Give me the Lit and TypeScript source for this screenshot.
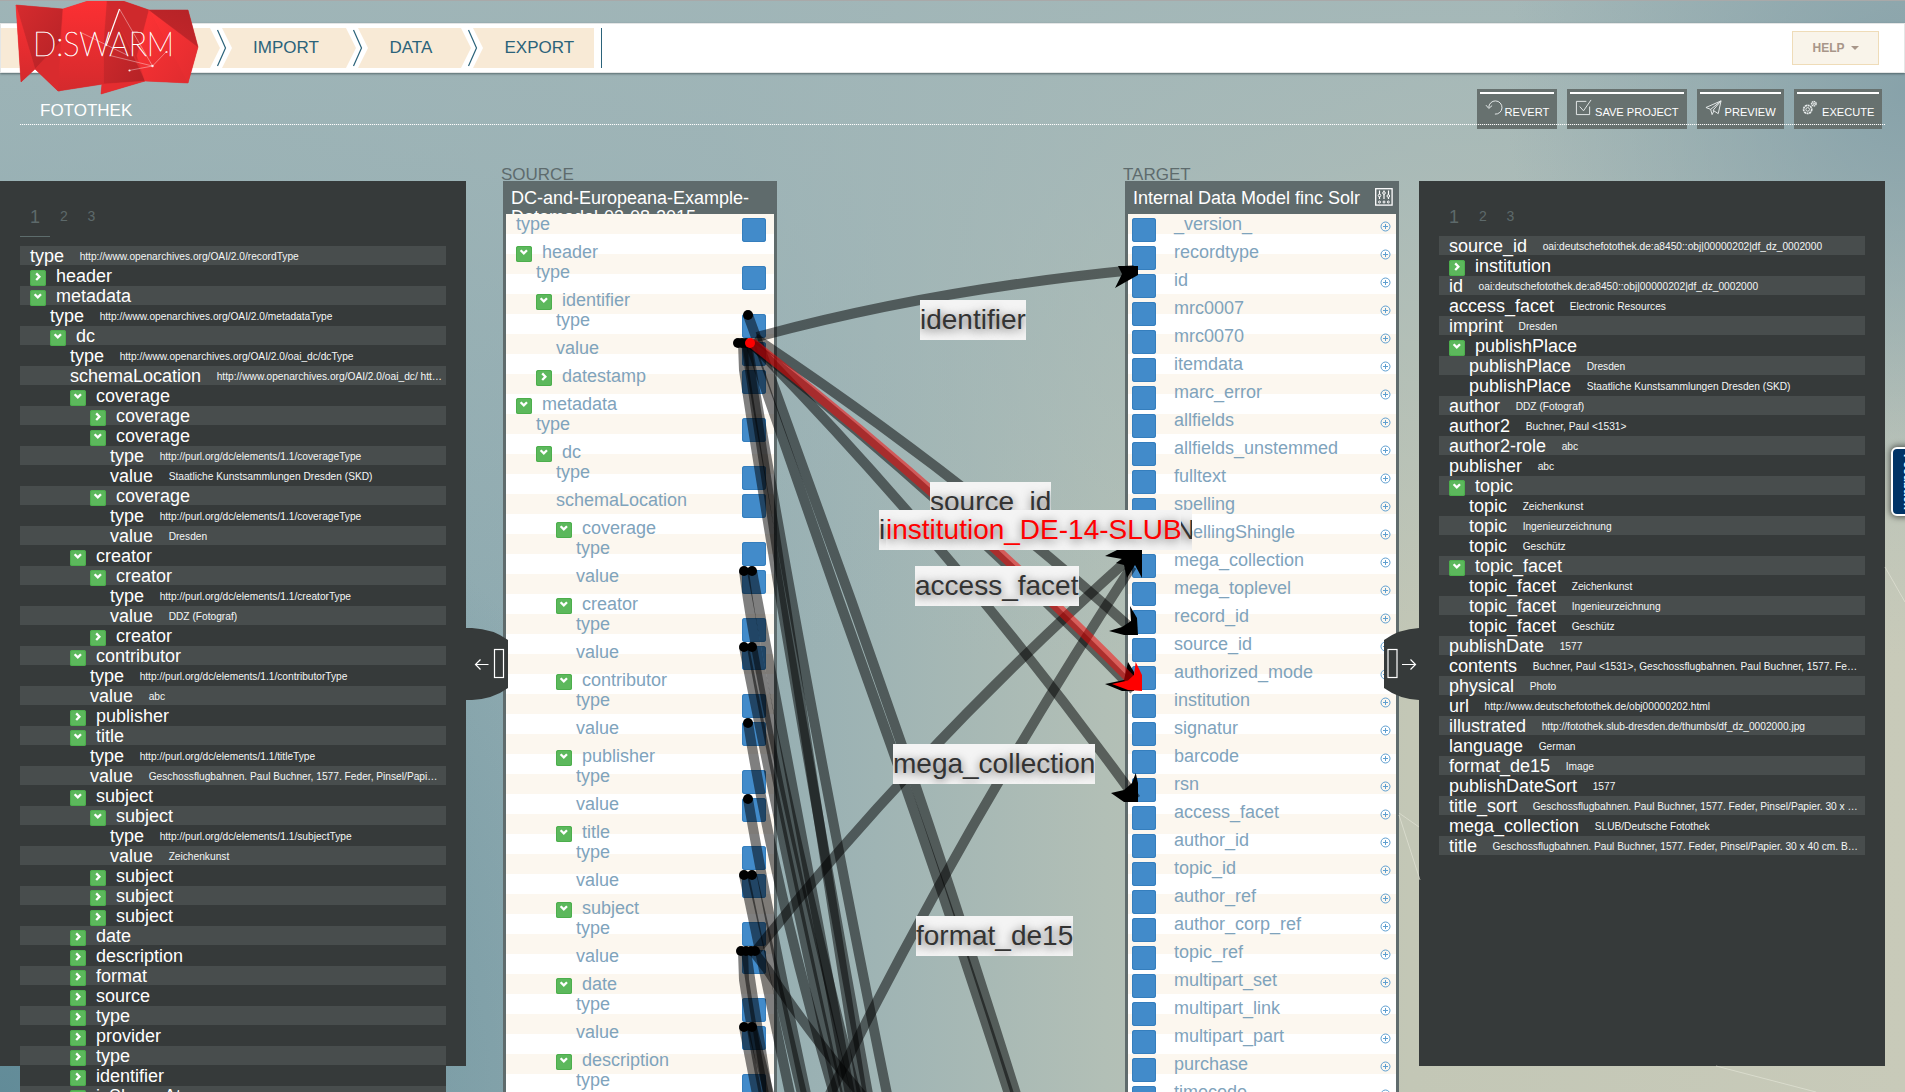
import { LitElement, html, css, svg, nothing } from "lit";
import { customElement, property } from "lit/decorators.js";
import { classMap } from "lit/directives/class-map.js";
import { styleMap } from "lit/directives/style-map.js";

/** state: "o" open parent, "c" closed parent, "" leaf */
type Node = [level: number, state: "" | "o" | "c", name: string, value?: string];

const PURL = "http://purl.org/dc/elements/1.1/";

const SOURCE_RECORD: Node[] = [
  [0, "", "type", "http://www.openarchives.org/OAI/2.0/recordType"],
  [0, "c", "header"],
  [0, "o", "metadata"],
  [1, "", "type", "http://www.openarchives.org/OAI/2.0/metadataType"],
  [1, "o", "dc"],
  [2, "", "type", "http://www.openarchives.org/OAI/2.0/oai_dc/dcType"],
  [2, "", "schemaLocation", "http://www.openarchives.org/OAI/2.0/oai_dc/ htt…"],
  [2, "o", "coverage"],
  [3, "c", "coverage"],
  [3, "o", "coverage"],
  [4, "", "type", PURL + "coverageType"],
  [4, "", "value", "Staatliche Kunstsammlungen Dresden (SKD)"],
  [3, "o", "coverage"],
  [4, "", "type", PURL + "coverageType"],
  [4, "", "value", "Dresden"],
  [2, "o", "creator"],
  [3, "o", "creator"],
  [4, "", "type", PURL + "creatorType"],
  [4, "", "value", "DDZ (Fotograf)"],
  [3, "c", "creator"],
  [2, "o", "contributor"],
  [3, "", "type", PURL + "contributorType"],
  [3, "", "value", "abc"],
  [2, "c", "publisher"],
  [2, "o", "title"],
  [3, "", "type", PURL + "titleType"],
  [3, "", "value", "Geschossflugbahnen. Paul Buchner, 1577. Feder, Pinsel/Papi…"],
  [2, "o", "subject"],
  [3, "o", "subject"],
  [4, "", "type", PURL + "subjectType"],
  [4, "", "value", "Zeichenkunst"],
  [3, "c", "subject"],
  [3, "c", "subject"],
  [3, "c", "subject"],
  [2, "c", "date"],
  [2, "c", "description"],
  [2, "c", "format"],
  [2, "c", "source"],
  [2, "c", "type"],
  [2, "c", "provider"],
  [2, "c", "type"],
  [2, "c", "identifier"],
  [2, "c", "isShownAt"],
];

const TARGET_RECORD: Node[] = [
  [0, "", "source_id", "oai:deutschefotothek.de:a8450::obj|00000202|df_dz_0002000"],
  [0, "c", "institution"],
  [0, "", "id", "oai:deutschefotothek.de:a8450::obj|00000202|df_dz_0002000"],
  [0, "", "access_facet", "Electronic Resources"],
  [0, "", "imprint", "Dresden"],
  [0, "o", "publishPlace"],
  [1, "", "publishPlace", "Dresden"],
  [1, "", "publishPlace", "Staatliche Kunstsammlungen Dresden (SKD)"],
  [0, "", "author", "DDZ (Fotograf)"],
  [0, "", "author2", "Buchner, Paul <1531>"],
  [0, "", "author2-role", "abc"],
  [0, "", "publisher", "abc"],
  [0, "o", "topic"],
  [1, "", "topic", "Zeichenkunst"],
  [1, "", "topic", "Ingenieurzeichnung"],
  [1, "", "topic", "Geschütz"],
  [0, "o", "topic_facet"],
  [1, "", "topic_facet", "Zeichenkunst"],
  [1, "", "topic_facet", "Ingenieurzeichnung"],
  [1, "", "topic_facet", "Geschütz"],
  [0, "", "publishDate", "1577"],
  [0, "", "contents", "Buchner, Paul <1531>, Geschossflugbahnen. Paul Buchner, 1577. Fe…"],
  [0, "", "physical", "Photo"],
  [0, "", "url", "http://www.deutschefotothek.de/obj00000202.html"],
  [0, "", "illustrated", "http://fotothek.slub-dresden.de/thumbs/df_dz_0002000.jpg"],
  [0, "", "language", "German"],
  [0, "", "format_de15", "Image"],
  [0, "", "publishDateSort", "1577"],
  [0, "", "title_sort", "Geschossflugbahnen. Paul Buchner, 1577. Feder, Pinsel/Papier. 30 x …"],
  [0, "", "mega_collection", "SLUB/Deutsche Fotothek"],
  [0, "", "title", "Geschossflugbahnen. Paul Buchner, 1577. Feder, Pinsel/Papier. 30 x 40 cm. B…"],
];

const typed = (name: string): Node[] => [
  [2, "o", name],
  [3, "", "type"],
  [3, "", "value"],
];

const SOURCE_SCHEMA: Node[] = [
  [0, "", "type"],
  [0, "o", "header"],
  [1, "", "type"],
  [1, "o", "identifier"],
  [2, "", "type"],
  [2, "", "value"],
  [1, "c", "datestamp"],
  [0, "o", "metadata"],
  [1, "", "type"],
  [1, "o", "dc"],
  [2, "", "type"],
  [2, "", "schemaLocation"],
  ...["coverage", "creator", "contributor", "publisher", "title", "subject", "date", "description"].flatMap(typed),
];

const TARGET_SCHEMA = [
  "_version_", "recordtype", "id", "mrc0007", "mrc0070", "itemdata", "marc_error", "allfields",
  "allfields_unstemmed", "fulltext", "spelling", "spellingShingle", "mega_collection", "mega_toplevel",
  "record_id", "source_id", "authorized_mode", "institution", "signatur", "barcode", "rsn", "access_facet",
  "author_id", "topic_id", "author_ref", "author_corp_ref", "topic_ref", "multipart_set", "multipart_link",
  "multipart_part", "purchase", "timecode",
];

const toggle = (state: string) => html`<span class="tg"><svg width="16" height="16" viewBox="0 0 16 16">
  <path d=${state === "o" ? "M4.6 4.2 L7.8 7.4 L11 4.2" : "M6.2 3.4 L9.4 6.7 L6.2 10"} fill="none" stroke="#fff" stroke-width="2.3" />
</svg></span>`;

const toggleStyles = css`
  .tg { flex: none; width: 16px; height: 16px; box-sizing: border-box; margin: 4px 10px 0 0; background: #5cb85c;
    border-radius: 2.5px; box-shadow: inset 0 0 0 1px #4cae4c; }
  .tg svg { display: block; }
`;

@customElement("record-tree")
class RecordTree extends LitElement {
  @property({ attribute: false }) rows: Node[] = [];
  static styles = [toggleStyles, css`
    :host { display: block; background: #363a3a; color: #fff; font-size: 18px; line-height: 20px; }
    .row { display: flex; height: 19px; margin-bottom: 1px; padding-left: 10px; white-space: nowrap; }
    .row:nth-child(odd) { background: #484d4d; }
    .val { font-size: 10.2px; margin-left: 15.6px; line-height: 21px; color: #f4f6f6; }
  `];
  render() {
    return this.rows.map(([level, state, name, value]) => html`
      <div class="row"><span class="ind" style=${styleMap({ width: level * 20 + "px" })}></span>${state ? toggle(state) : nothing}<span>${name}</span>${value ? html`<span class="val">${value}</span>` : nothing}</div>`);
  }
}

@customElement("schema-box")
class SchemaBox extends LitElement {
  @property() heading = "";
  @property({ type: Boolean }) target = false;
  @property({ attribute: false }) rows: Node[] = [];
  static styles = [toggleStyles, css`
    :host { display: flex; flex-direction: column; box-sizing: border-box; width: 274px; height: 911px; overflow: hidden;
      background: #5f6b6c; padding: 0 3px; }
    .head { flex: none; height: 33px; box-sizing: border-box; padding: 8px 3px 0 5px; color: #fff; font-size: 18px; line-height: 18.5px;
      overflow: hidden; display: flex; justify-content: space-between; }
    .head svg { flex: none; margin: -1px 0 0 2px; }
    .body { flex: 1; overflow: hidden; font-size: 18px; line-height: 20px; color: #7fa3bc;
      background: repeating-linear-gradient(#fcf7ef 0 20px, #fff 20px 40px); }
    .row { display: flex; height: 28px; padding: 0 8px 0 10px; }
    .row.open { height: 20px; }
    .name { flex: 1; }
    .port { flex: none; width: 24px; height: 24px; margin-top: 4px; background: #428bca; border-radius: 3px;
      box-shadow: inset 0 0 0 1px #357ebd; }
    .target .row { padding: 0 5.5px 0 4px; }
    .target .name { padding-left: 18px; }
    .plus { flex: none; margin-top: 6.5px; }
  `];
  render() {
    return html`
      <div class="head"><span>${this.heading}</span>${this.target ? html`<svg width="18" height="18" viewBox="0 0 18 18" fill="none" stroke="#fff">
        <rect x=".7" y=".7" width="16.4" height="16.4" stroke-width="1.3"/>
        <path d="M4.5 2.5v8.5M9 2.5v8.5M13.5 2.5v8.5" stroke-width="1.2"/>
        <g stroke-width="1" fill="#5f6b6c"><circle cx="4.5" cy="7.5" r="1.3"/><circle cx="9" cy="5" r="1.3"/><circle cx="13.3" cy="8" r="1.3"/>
        <circle cx="4.5" cy="14" r="1"/><circle cx="9" cy="14" r="1"/><circle cx="13.3" cy="14" r="1"/></g></svg>` : nothing}</div>
      <div class=${classMap({ body: true, target: this.target })}>
        ${this.rows.map(([level, state, name]) => this.target
          ? html`<div class="row"><span class="port"></span><span class="name">${name}</span><svg class="plus" width="11" height="11" viewBox="0 0 11 11" fill="none" stroke="#5f9fd0" stroke-width="1"><circle cx="5.5" cy="5.5" r="4.5"/><path d="M5.5 3v5M3 5.5h5"/></svg></div>`
          : html`<div class=${classMap({ row: true, open: state === "o" })}><span style=${styleMap({ width: level * 20 + "px" })}></span>${state ? toggle(state) : nothing}<span class="name">${name}</span>${state === "o" ? nothing : html`<span class="port"></span>`}</div>`)}
      </div>`;
  }
}

const LINES = [
  "M757 337 Q930 290 1134 270",
  "M755 338 Q965 478 1134 631",
  "M750 343 Q957 507 1134 690",
  "M752 343 Q960 556 1136 799",
  "M750 343 L770 402 L839 600 L890.5 744 Q951 915 1009 1094",
  "M748 315 L851 600 L901.5 744 Q960 915 1016 1094",
  "M756 951 Q920 745 1132 556",
  "M826 1102 Q960 830 1132 566",
  "M753 951 L767 969 Q805 1028 866 1100",
  "M747 343 Q805 690 887 1094",
  "M743 343 L744 370 Q780 610 868 1094",
  "M746 343 Q790 640 862 1094",
  "M744 571 Q760 700 856 1094",
  "M752 571 Q775 700 850 1094",
  "M744 647 Q780 830 838 1094",
  "M752 647 Q785 830 846 1094",
  "M748 723 Q775 890 834 1094",
  "M748 799 Q765 900 806 1094",
  "M744 875 Q770 1000 790 1094",
  "M752 875 Q780 1000 802 1094",
  "M743 951 L744 980 Q755 1050 764 1094",
  "M746 951 Q756 1020 768 1094",
  "M744 1027 L757 1094",
  "M752 1027 L769 1094",
];

const DOTS: [number, number][] = [
  [748, 315], [738, 343], [742, 343], [746, 343],
  [744, 571], [752, 571], [744, 647], [752, 647], [748, 723], [748, 799],
  [744, 875], [752, 875], [741, 951], [746, 951], [751, 951], [755, 951], [744, 1027], [752, 1027],
];

const ARROWS = [
  "1118,266 1138,266 1138,275 1115,288 1122,274",
  "1117,550 1142,550 1142,578 1135,565 1127,578 1124,565 1116,563 1122,559 1105,556",
  "1130,606 1137,618 1138,635 1124,635 1109,631 1122,627 1131,621",
  "1128,662 1134,672 1134,691 1122,691 1105,684 1124,680",
  "1135.7,773 1138,783 1138,802 1124,802 1111,793 1124,790 1132,783",
];

const LABELS = [
  { x: 920, y: 300, w: 106, t: "identifier" },
  { x: 930, y: 482, w: 121, t: "source_id" },
  { x: 879, y: 510, w: 313, t: "institution_DE-14-SLUBN" },
  { x: 886, y: 510, w: 295, t: "institution_DE-14-SLUB", red: true },
  { x: 915, y: 566, w: 164, t: "access_facet" },
  { x: 893, y: 744, w: 202, t: "mega_collection" },
  { x: 916, y: 916, w: 157, t: "format_de15" },
];

const ICONS = {
  revert: svg`<path d="M4 10 A7 7 0 1 1 10.5 17"/><path d="M1 7.5 L4 11 L7.5 8"/>`,
  save: svg`<path d="M12 3.5H1.5v14h14V9"/><path d="M5 9l4 4.5L17 2"/>`,
  preview: svg`<path d="M1 10 L17 3 L14 16.5 L8.5 13 L17 3 L6 12 L1 10 M6 12 L7.5 17.5 L9.5 13.5"/>`,
  execute: svg`<circle cx="6" cy="12" r="4.3" stroke-dasharray="2.2 .6" stroke-width="1.8"/><circle cx="6" cy="12" r="1.9"/><circle cx="12.5" cy="6" r="2.4" stroke-dasharray="1.5 .5" stroke-width="1.5"/><circle cx="12.5" cy="6" r=".8"/>`,
};

@customElement("app-root")
class AppRoot extends LitElement {
  static styles = css`
    :host { display: block; font-family: "Liberation Sans", Arial, sans-serif; }
    .page { position: relative; width: 1905px; height: 1092px; overflow: hidden; box-sizing: border-box; border-top: 1px solid #a9a9a9;
      display: flex; flex-direction: column;
      background:
        radial-gradient(ellipse 400px 400px at 1905px 90px, rgba(134,161,169,.95), rgba(134,161,169,0)),
        radial-gradient(ellipse 700px 700px at 0 1092px, rgba(96,138,151,.95), rgba(96,138,151,0)),
        linear-gradient(rgba(161,182,184,.9), rgba(161,182,184,.75) 15%, rgba(161,182,184,0) 60%),
        linear-gradient(90deg, #84a4ac 0, #93adb2 38%, #9fb4b4 46%, #b2bfb6 58%, #c3c7b6 74%, #c8cab9 100%); }
    .bar { flex: none; margin-top: 22px; height: 50px; box-sizing: border-box; background: #fff; border: 1px solid #e4e6e6;
      box-shadow: 0 1px 2px rgba(60,75,80,.7); display: flex; align-items: center; justify-content: space-between; padding-right: 25px; }
    .nav { display: flex; height: 40px; color: #2b637a; font-size: 17px; line-height: 39.5px; }
    .step { background: #f8ead6; box-sizing: border-box; }
    .s0 { width: 209px; } .s1 { width: 114px; padding-left: 21px; } .s2 { width: 93px; padding-left: 21.5px; } .s3 { width: 111px; padding-left: 21.5px; }
    .end { width: 7px; border-right: 1px solid #2b637a; }
    .sep { display: block; background: #f8ead6; }
    .help { width: 87px; height: 34px; box-sizing: border-box; border: 1px solid #efdcb8; background: #f9f4ea; color: #a89689;
      font: bold 12px/32px "Liberation Sans", Arial, sans-serif; display: flex; align-items: center; justify-content: center; gap: 6px; }
    .title { flex: none; height: 52px; box-sizing: border-box; margin: 0 20px; padding: 0 3px 0 20px; display: flex; justify-content: space-between; }
    .title h1 { margin: 27.5px 0 0; font-weight: 400; font-size: 17px; line-height: 20px; color: #fff; }
    .rule { flex: none; height: 1px; margin: -1px 20px 0; position: relative;
      background: repeating-linear-gradient(90deg, #fff 0 1px, rgba(255,255,255,.15) 1px 2px); }
    .acts { display: flex; gap: 10px; padding-top: 16px; height: 40px; }
    .act { height: 40px; box-sizing: border-box; background: #67716f; padding: 3px 3px 0; color: #fff; font-size: 11.1px; }
    .act div { border-top: 2px solid #fff; display: flex; padding-left: 5px; gap: 2.5px; }
    .act svg { margin-top: 4px; overflow: visible; }
    .act span { line-height: 14px; padding-top: 11px; white-space: nowrap; }
    .a0 { width: 80px; } .a1 { width: 120px; } .a2 { width: 87px; } .a3 { width: 88px; }
    .a1 div, .a3 div { gap: 3px; }
    .main { display: flex; padding-top: 39px; }
    .side { width: 466px; height: 885px; margin-top: 17px; box-sizing: border-box; padding: 0 20px; background: #363a3a; }
    .tabs { display: flex; height: 55px; color: #5d696a; font-size: 14px; line-height: 16px; padding: 27px 10px 0; box-sizing: border-box; }
    .tabs b { font-weight: 400; font-size: 18px; line-height: 18px; width: 30px; }
    .tabs span { width: 27.5px; }
    .line { width: 30px; height: 1px; background: #5d6c6c; margin-bottom: 9px; }
    .col { width: 274px; }
    .col p { margin: 0 0 0 -2px; height: 17px; line-height: 21.5px; font-size: 17px; color: #5e6b6d; }
    .c1 { margin-left: 37px; } .c2 { margin-left: 348px; } .c3 { margin-left: 20px; }
    .over { position: absolute; left: 0; top: -1px; pointer-events: none; }
    .label { position: absolute; box-sizing: border-box; height: 40px; line-height: 40px; font-size: 28px; background: #f4f4f4; color: #333;
      text-shadow: 0 2px 10px rgba(0,0,0,.65); white-space: nowrap; overflow: hidden; }
    .red { color: #f00; }
    .feedback { position: absolute; left: 1891px; top: 446px; width: 36px; height: 69px; box-sizing: border-box; background: #036;
      border: 2px solid #fff; border-radius: 6px; box-shadow: 0 0 6px 1px rgba(0,0,0,.6); color: #fff; font-weight: bold; font-size: 12px;
      writing-mode: vertical-rl; line-height: 14px; padding: 5px 10.5px 0 0; white-space: nowrap; }
  `;

  private sep() {
    return html`<svg class="sep" width="22" height="40" viewBox="0 0 22 40">
      <path d="M0 0 H12 L22 20 L12 40 H0 L10 20Z" fill="#fff"/>
      <path d="M7.5 2 L15.5 20 L7.5 38" fill="none" stroke="#2b637a" stroke-width="1.2"/></svg>`;
  }

  private act(cls: string, icon: keyof typeof ICONS, text: string) {
    return html`<div class="act ${cls}"><div><svg width="17" height="19" viewBox="0 0 18 20" fill="none" stroke="#e9eded" stroke-width="1">${ICONS[icon]}</svg><span>${text}</span></div></div>`;
  }

  private logo() {
    const f = (p: string, c: string) => svg`<polygon points=${p} fill=${c} stroke=${c} stroke-width=".3"/>`;
    return html`<svg class="over" width="210" height="100" viewBox="0 0 210 100">
      <defs>
        <linearGradient id="a" x1="1" y1="0" x2=".4" y2="1"><stop offset="0" stop-color="#b52327"/><stop offset="1" stop-color="#c4262a"/></linearGradient>
        <linearGradient id="b" x1="0" y1="0" x2="0" y2="1"><stop offset="0" stop-color="#fc3033"/><stop offset="1" stop-color="#d42a2d"/></linearGradient>
        <linearGradient id="c" x1="0" y1="0" x2="1" y2="1"><stop offset="0" stop-color="#d62b2e"/><stop offset="1" stop-color="#b42226"/></linearGradient>
        <linearGradient id="d" x1="0" y1="0" x2="1" y2="1"><stop offset="0" stop-color="#ff3335"/><stop offset="1" stop-color="#e02c2f"/></linearGradient>
      </defs>
      ${f("16,5 63,9 88,1 123,1 149,10 188,10 198,47 188,83 145,81 101,94 102,84 58,91 35,69 21,82", "#dd2c2f")}
      ${f("16,5 63,9 61,42 35,69", "url(#c)")}
      ${f("16,5 35,69 21,82", "url(#b)")}
      ${f("63,9 60,91 58,91 35,69 60,42", "#d92b2e")}
      ${f("63,9 88,1 107,1 104,84 58,91", "url(#b)")}
      ${f("107,1 104,40 104,84 145,81", "url(#c)")}
      ${f("107,1 123,1 149,10 137,60", "#cf292c")}
      ${f("149,10 137,56 145,81", "#e02d30")}
      ${f("149,10 188,83 145,81 137,56", "url(#d)")}
      ${f("149,10 198,47 188,83", "url(#d)")}
      ${f("149,10 188,10 198,47", "url(#a)")}
      ${f("102,84 145,81 101,94", "#e42d30")}
      <g fill="none" stroke="#fff"><path d="M119.5 9 L106 46" stroke-width="1.2"/>
      <path d="M119.5 9 L152.5 66 L166 52 M152.5 66 L110 55.5 M152.5 66 L129 70.5 M82 33 L128 55.5" stroke-width=".7" opacity=".55"/></g>
      <g fill="#fff" opacity=".85"><circle cx="152.5" cy="66" r="1.2"/><circle cx="166.5" cy="52" r="1.1"/><circle cx="129.5" cy="70.5" r="1.1"/></g>
      <text x="33" y="55.5" font-family="Lato, Roboto, sans-serif" font-weight="100" font-size="33" textLength="141" lengthAdjust="spacingAndGlyphs" fill="#fff" stroke="#fff" stroke-width=".5">D:SWARM</text>
    </svg>`;
  }

  private tabs() {
    return html`<div class="tabs"><b>1</b><span>2</span><span>3</span></div>`;
  }

  render() {
    return html`<div class="page">
      <svg class="over" width="1905" height="1092" fill="none" stroke="#e2e4d6" stroke-width="1" opacity=".7">
        <path d="M1399 813 L1419 827 M1399 815 L1420 880 M1885 567 L1905 602 M1716 1066 L1816 1092"/></svg>
      <div class="bar">
        <div class="nav"><div class="step s0"></div>${this.sep()}<div class="step s1">IMPORT</div>${this.sep()}<div class="step s2">DATA</div>${this.sep()}<div class="step s3">EXPORT</div><div class="end"></div></div>
        <div class="help">HELP<svg width="8" height="4"><path d="M0 0h8L4 4z" fill="#a89689"/></svg></div>
      </div>
      <div class="title"><h1>FOTOTHEK</h1>
        <div class="acts">${this.act("a0", "revert", "REVERT")}${this.act("a1", "save", "SAVE PROJECT")}${this.act("a2", "preview", "PREVIEW")}${this.act("a3", "execute", "EXECUTE")}</div>
      </div>
      <div class="rule"></div>
      <div class="main">
        <div class="side">${this.tabs()}<div class="line"></div><record-tree .rows=${SOURCE_RECORD}></record-tree></div>
        <div class="col c1"><p>SOURCE</p><schema-box heading="DC-and-Europeana-Example-Datamodel-03-08-2015" .rows=${SOURCE_SCHEMA}></schema-box></div>
        <div class="col c2"><p>TARGET</p><schema-box heading="Internal Data Model finc Solr" target .rows=${TARGET_SCHEMA.map((n) => [0, "", n] as Node)}></schema-box></div>
        <div class="side c3">${this.tabs()}<record-tree .rows=${TARGET_RECORD}></record-tree></div>
      </div>
      <svg class="over" width="1905" height="1092" fill="none">
        <g stroke="#000" stroke-opacity=".5" stroke-width="10">${LINES.map((d) => svg`<path d=${d}/>`)}</g>
        ${DOTS.map(([x, y]) => svg`<circle cx=${x} cy=${y} r="5" fill="#000"/>`)}
        ${ARROWS.map((p) => svg`<polygon points=${p} fill="#000"/>`)}
        <path d="M752 343 Q960 505 1137 686" stroke="#f00" stroke-opacity=".5" stroke-width="10"/>
        <circle cx="750" cy="343" r="5" fill="#f00"/>
        <polygon points="1135.7,662 1142,675 1142,691 1128,690 1112,684 1128,680.5 1134,675" fill="#f00"/>
        <path d="M466 628 H472 Q493 629 508 640 V688 Q493 699 472 700 H466Z" fill="#363a3a"/>
        <path d="M1419 628 Q1399 629 1384 640 V688 Q1399 699 1419 700Z" fill="#363a3a"/>
        <g stroke="#fff" stroke-width="1.2"><rect x="494.5" y="649.5" width="9" height="28"/><path d="M488.5 664.5H475.5M480.5 659.5L475.5 664.5L480.5 669.5"/>
        <rect x="1388" y="649.5" width="9" height="28"/><path d="M1402 664.5H1415.5M1410.5 659.5L1415.5 664.5L1410.5 669.5"/></g>
      </svg>
      ${LABELS.map((l) => html`<div class=${classMap({ label: true, red: !!l.red })} style=${styleMap({ left: l.x + "px", top: l.y - 1 + "px", width: l.w + "px" })}>${l.t}</div>`)}
      <div class="feedback">Feedback</div>
      ${this.logo()}
    </div>`;
  }
}
